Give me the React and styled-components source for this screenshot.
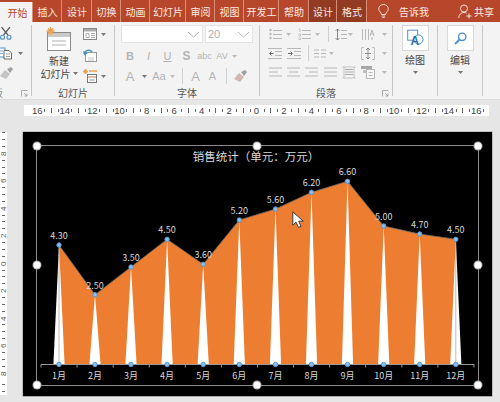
import React from "react";
import styled, { createGlobalStyle } from "styled-components";

const Global = createGlobalStyle`
  html, body { margin: 0; padding: 0; background: #e6e6e6; }
  body { font-family: "Noto Sans CJK SC", "Liberation Sans", sans-serif; }
  #root { width: 500px; height: 402px; overflow: hidden; }
`;

const Page = styled.div`
  width: 500px;
  height: 402px;
  display: flex;
  flex-direction: column;
  overflow: hidden;
  background: #e6e6e6;
`;

/* ---------- tab strip ---------- */
const TabBar = styled.div`
  height: 22px;
  flex: none;
  display: flex;
  background: #b7472a;
`;
const Tab = styled.div`
  flex: none;
  width: ${(p) => p.$w}px;
  box-sizing: border-box;
  margin-top: ${(p) => (p.$active ? 2 : 0)}px;
  height: ${(p) => (p.$active ? 20 : 22)}px;
  padding-left: ${(p) => (p.$active ? 3 : 1)}px;
  display: flex;
  align-items: center;
  justify-content: center;
  font-size: 10px;
  white-space: nowrap;
  overflow: hidden;
  color: ${(p) => (p.$active ? "#b7472a" : "#fbe9e2")};
  background: ${(p) => (p.$active ? "#f3f3f3" : p.$dark ? "#923a22" : "transparent")};
  border-right: ${(p) => (p.$plain ? "none" : "1px solid #d98d75")};
`;
const TabTail = styled.div`
  display: flex;
  align-items: center;
  color: #fbe9e2;
  font-size: 10px;
  height: 22px;
  margin-left: ${(p) => p.$ml}px;
  gap: ${(p) => p.$gap || 0}px;
`;

/* ---------- ribbon ---------- */
const Ribbon = styled.div`
  height: 78px;
  flex: none;
  box-sizing: border-box;
  display: flex;
  background: #f3f3f3;
  border-bottom: 1px solid #dcdcdc;
`;
const Group = styled.div`
  flex: none;
  width: ${(p) => p.$w}px;
  box-sizing: border-box;
  height: 71px;
  margin-top: 3px;
  border-right: 1px solid #c6c6c6;
  display: flex;
  flex-direction: column;
  padding-left: ${(p) => p.$pl || 0}px;
`;
const GroupBody = styled.div`
  flex: 1;
  min-height: 0;
  display: flex;
  flex-direction: ${(p) => (p.$row ? "row" : "column")};
  align-items: ${(p) => (p.$center ? "center" : "stretch")};
  padding-top: ${(p) => p.$pt || 0}px;
  gap: ${(p) => p.$gap || 0}px;
`;
const LabelRow = styled.div`
  height: 14px;
  margin-bottom: -4px;
  margin-left: ${(p) => -(p.$pl || 0)}px;
  display: grid;
  grid-template-columns: 1fr auto 1fr;
  align-items: center;
  font-size: 10px;
  line-height: 14px;
  color: #555;
`;
const LabelText = styled.span`
  grid-column: 2;
  white-space: nowrap;
`;
const Launcher = styled.span`
  grid-column: 3;
  justify-self: end;
  margin-right: 3px;
  display: flex;
`;
const ClippedLabel = styled.span`
  grid-column: 1;
  margin-left: -7px;
  color: #888;
`;
const Row = styled.div`
  display: flex;
  align-items: center;
  height: ${(p) => p.$h || 14}px;
  flex: none;
`;
const Slot = styled.div`
  flex: none;
  width: ${(p) => p.$w}px;
  display: flex;
  align-items: center;
  justify-content: center;
`;
const Letter = styled.span`
  font-family: "Liberation Sans", sans-serif;
  color: #b3b3b3;
  line-height: 1;
  font-size: ${(p) => p.$s || 11}px;
  font-weight: ${(p) => (p.$bold ? 700 : 400)};
  font-style: ${(p) => (p.$italic ? "italic" : "normal")};
  text-decoration: ${(p) => (p.$under ? "underline" : "none")};
  letter-spacing: ${(p) => p.$ls || 0}px;
`;
const RowDivider = styled.div`
  width: 1px;
  height: 16px;
  background: #d0d0d0;
`;
const Combo = styled.div`
  flex: none;
  box-sizing: border-box;
  width: ${(p) => p.$w}px;
  height: 18px;
  margin-right: 2px;
  background: #fff;
  border: 1px solid #e3e3e3;
  display: flex;
  align-items: center;
  justify-content: space-between;
  padding: 0 2px 0 2px;
  font-family: "Liberation Sans", sans-serif;
  font-size: 11px;
  color: #b0b0b0;
`;
const BigCol = styled.div`
  width: 48px;
  margin-left: 3px;
  flex: none;
  display: flex;
  flex-direction: column;
  align-items: center;
  color: #444;
  font-size: 10px;
  line-height: 13px;
`;
const BigText = styled.div`
  white-space: nowrap;
  display: flex;
  align-items: center;
  gap: 2px;
  margin-top: ${(p) => p.$mt || 0}px;
`;
const SmallCol = styled.div`
  flex: none;
  display: flex;
  flex-direction: column;
  gap: ${(p) => p.$gap || 7}px;
  align-items: flex-start;
`;
const IconRow = styled.div`
  display: flex;
  align-items: center;
  gap: ${(p) => p.$gap || 3}px;
  height: 14px;
`;
const SquareButton = styled.div`
  box-sizing: border-box;
  width: 27px;
  height: 26px;
  background: #fff;
  border: 1px solid #d8d8d8;
  display: flex;
  align-items: center;
  justify-content: center;
  flex: none;
`;
const ButtonText = styled.div`
  font-size: 10px;
  line-height: 12px;
  color: #444;
  margin-top: 3px;
`;

/* ---------- rulers ---------- */
const HRulerBar = styled.div`
  height: 20px;
  flex: none;
  display: flex;
  align-items: center;
  padding-left: 24px;
  background: #e6e6e6;
`;
const HRuler = styled.div`
  width: 465px;
  height: 11px;
  background: #fff;
  display: flex;
  align-items: center;
  padding-left: 8px;
  box-sizing: border-box;
  overflow: hidden;
`;
const HCell = styled.div`
  flex: none;
  width: 27.45px;
  display: flex;
  align-items: center;
`;
const HNum = styled.span`
  flex: none;
  width: 10px;
  text-align: center;
  font-family: "Liberation Sans", sans-serif;
  font-size: 9.5px;
  line-height: 11px;
  color: #444;
`;
const HTicks = styled.div`
  display: flex;
  align-items: center;
  gap: 5.85px;
  margin-left: 2px;
`;
const HTick = styled.i`
  display: block;
  width: 1px;
  height: ${(p) => (p.$long ? 5 : 3)}px;
  background: #666;
`;
const Workspace = styled.div`
  flex: 1;
  min-height: 0;
  display: flex;
  align-items: flex-start;
  padding-top: 12px;
`;
const VRuler = styled.div`
  flex: none;
  width: 7px;
  height: 263px;
  margin-right: 15.5px;
  background: #fff;
  display: flex;
  flex-direction: column;
  overflow: hidden;
`;
const VCell = styled.div`
  flex: none;
  height: ${(p) => p.$h || 27.45}px;
  display: flex;
  flex-direction: column;
  align-items: center;
  justify-content: flex-end;
`;
const VNum = styled.span`
  writing-mode: vertical-rl;
  transform: rotate(180deg);
  font-family: "Liberation Sans", sans-serif;
  font-size: 8px;
  line-height: 7px;
  height: 9px;
  text-align: center;
  color: #555;
`;
const VTicks = styled.div`
  display: flex;
  flex-direction: column;
  gap: 5.85px;
  margin-bottom: 2px;
`;
const VTick = styled.i`
  display: block;
  width: 3px;
  height: 1px;
  background: #666;
`;

/* ---------- slide ---------- */
const Slide = styled.div`
  position: relative;
  flex: none;
  width: 469px;
  height: 264px;
  box-sizing: border-box;
  background: #000;
  box-shadow: 0 0 0 0.5px #9a9a9a, 0 1px 0 #b5b5b5;
`;
const ChartSvg = styled.svg`
  display: block;
  width: 469px;
  height: 264px;
`;
const Frame = styled.div`
  position: absolute;
  left: 13px;
  top: 13px;
  width: 443px;
  height: 240.5px;
  box-sizing: border-box;
  border: 1px solid #8c8c8c;
`;
const Handle = styled.div`
  position: absolute;
  left: ${(p) => p.$x}%;
  top: ${(p) => p.$y}%;
  width: 7px;
  height: 7px;
  border-radius: 50%;
  transform: translate(-50%, -50%);
  background: #fff;
  box-shadow: 0 0 0 1px #a8a8a8;
`;
const Cursor = styled.svg`
  position: absolute;
  left: 269px;
  top: 79px;
  width: 13px;
  height: 17px;
`;

/* ---------- icons ---------- */
const G = "#b8b8b8";
const D = "#6a6a6a";
const B = "#4a8fc9";
const O = "#f0a050";

const Ico = ({ w, h, children }) => (
  <svg width={w} height={h} viewBox={`0 0 ${w} ${h}`} fill="none" style={{ display: "block", flex: "none" }}>
    {children}
  </svg>
);
const Caret = ({ c = "#777" }) => (
  <Ico w={5} h={3}>
    <path d="M0 0h5L2.5 3z" fill={c} />
  </Ico>
);
const Chevron = () => (
  <Ico w={13} h={7}>
    <path d="M1 1l5.5 5L12 1" stroke="#b4b4b4" strokeWidth="1" />
  </Ico>
);
const LauncherIcon = () => (
  <Ico w={7} h={7}>
    <path d="M.5 6.5v-6h6M3 3l3 3M6 3.5V6H3.5" stroke="#999" strokeWidth=".8" />
  </Ico>
);
const Lines = ({ x = 0, w = 10, ys = [], c = G }) => (
  <>
    {ys.map((y) => (
      <path key={y} d={`M${x} ${y}h${w}`} stroke={c} strokeWidth="1" />
    ))}
  </>
);
const ListIcon = () => (
  <Ico w={13} h={12}>
    <circle cx="1.5" cy="2" r="1.2" fill={G} />
    <circle cx="1.5" cy="6" r="1.2" fill={G} />
    <circle cx="1.5" cy="10" r="1.2" fill={G} />
    <Lines x={4} w={9} ys={[2.5, 6.5, 10.5]} />
  </Ico>
);
const NumListIcon = () => (
  <Ico w={13} h={12}>
    <path d="M1 1h1v3M.5 6h2v2h-2M.5 10h2v1.5h-2" stroke={G} strokeWidth=".8" />
    <Lines x={4} w={9} ys={[2.5, 6.5, 10.5]} />
  </Ico>
);
const SpacingIcon = () => (
  <Ico w={12} h={13}>
    <path d="M2.5 1v11M.5 3l2-2 2 2M.5 10l2 2 2-2" stroke={D} strokeWidth=".8" />
    <Lines x={6} w={6} ys={[2.5, 6.5, 10.5]} />
  </Ico>
);
const TextDirIcon = () => (
  <Ico w={14} h={13}>
    <path d="M1.5 1v11M4.5 1v11M7.5 1v11" stroke={G} strokeWidth="1" />
    <path d="M9 8l2-6 2 6M9.5 6h3M11 9v3" stroke={G} strokeWidth="1" />
  </Ico>
);
const IndentIcon = ({ flip }) => (
  <Ico w={14} h={11}>
    <path d={flip ? "M1 5.5h4M3.5 3.5l2 2-2 2" : "M5.5 5.5h-4M3.5 3.5l-2 2 2 2"} stroke={D} strokeWidth="1" />
    <Lines x={0} w={14} ys={[0.5, 10.5]} />
    <Lines x={7} w={7} ys={[3.5, 7.5]} />
  </Ico>
);
const ColsIcon = () => (
  <Ico w={12} h={9}>
    <Lines x={0} w={5} ys={[1, 4.5, 8]} />
    <Lines x={7} w={5} ys={[1, 4.5, 8]} />
  </Ico>
);
const AlignVIcon = () => (
  <Ico w={14} h={13}>
    <path d="M3 .5H.5v12H3M11 .5h2.5v12H11" stroke={G} strokeWidth=".8" />
    <path d="M7 1v11M5 3l2-2 2 2M5 10l2 2 2-2M4 6.5h6" stroke={D} strokeWidth=".7" />
  </Ico>
);
const AlignIcon = ({ kind }) => {
  const short = kind === "left" ? "M0 5h9M0 9h13" : kind === "center" ? "M2 5h9M0 9h13" : kind === "right" ? "M4 5h9M0 9h13" : "M0 5h13M0 9h13";
  return (
    <Ico w={13} h={10}>
      <path d="M0 1h13" stroke={G} />
      <path d={short} stroke={G} />
    </Ico>
  );
};
const DistIcon = () => (
  <Ico w={14} h={13}>
    <path d="M.5 1h13M.5 12h13M2 1v11M12 1v11" stroke={G} strokeWidth=".8" />
    <Lines x={3} w={8} ys={[3.5, 6, 8.5]} c="#aaa" />
  </Ico>
);
const SmartIcon = () => (
  <Ico w={14} h={14}>
    <path d="M0 1h11v3H0z" fill="#a8a8a8" />
    <path d="M2 5h4v3H2z" fill="#c0c0c0" />
    <rect x="5.5" y="4.5" width="8" height="9" stroke={G} fill="#f8f8f8" />
    <Lines x={7.5} w={4} ys={[7.5, 10.5]} />
  </Ico>
);
const Scissors = () => (
  <Ico w={12} h={13}>
    <path d="M10 0L3.5 8M1.5 0l6.5 8" stroke="#5a5a5a" strokeWidth="1.2" />
    <circle cx="2.5" cy="10.3" r="2" stroke={B} strokeWidth="1.1" />
    <circle cx="9" cy="10.3" r="2" stroke={B} strokeWidth="1.1" />
  </Ico>
);
const CopyIcon = () => (
  <Ico w={13} h={13}>
    <rect x="-3" y="1" width="8" height="9" fill="#fff" stroke={B} />
    <path d="M4 3.5h5l2.5 2.5v6H4z" fill="#fff" stroke="#666" />
    <path d="M-1 4h4M-1 6.5h4" stroke={B} strokeWidth=".8" />
    <path d="M6 7h4M6 9.5h4" stroke="#888" strokeWidth=".8" />
  </Ico>
);
const BrushIcon = ({ c = "#c4c4c4" }) => (
  <Ico w={13} h={13}>
    <path d="M7 2l4-2 2 2-3 4z" fill="#a0a0a0" />
    <path d="M5 3l5 4-4 5-6-3z" fill={c} />
  </Ico>
);
const NewSlideIcon = () => (
  <Ico w={26} h={24}>
    <rect x="1.5" y="5.5" width="23" height="18" fill="#fff" stroke="#8a8a8a" />
    <path d="M2 6h22v4H2z" fill="#c9c9c9" />
    <path d="M6 14h14M6 18h14" stroke="#b0b0b0" />
    <g stroke={O} strokeWidth="1.3">
      <path d="M4.5 0v8M.5 4h8M1.8 1.3l5.4 5.4M7.2 1.3L1.8 6.7" />
    </g>
  </Ico>
);
const LayoutIcon = () => (
  <Ico w={14} h={12}>
    <rect x=".5" y=".5" width="13" height="11" fill="#fff" stroke="#888" />
    <path d="M1 1h12v2.5H1z" fill="#aaa" />
    <path d="M3 5.5h3v4H3zM8 5.5h4M8 7.5h4M8 9.5h4" stroke="#999" strokeWidth=".8" />
  </Ico>
);
const ResetIcon = () => (
  <Ico w={14} h={13}>
    <rect x="2.5" y="3.5" width="11" height="9" fill="#fff" stroke="#999" />
    <path d="M5 9h6M5 11h6" stroke="#bbb" strokeWidth=".8" />
    <path d="M1 5c1-4 6-5 8-2" stroke={B} strokeWidth="1.5" />
    <path d="M0 2l1.5 4.5L5 4z" fill={B} />
  </Ico>
);
const SectionIcon = () => (
  <Ico w={14} h={14}>
    <g stroke={O} strokeWidth="1.1"><path d="M2.5 0v5M0 2.5h5M.8.8l3.4 3.4M4.2.8L.8 4.2" /></g>
    <path d="M6 2h8" stroke={O} strokeWidth="1.5" />
    <rect x="4.5" y="5.5" width="9" height="8" fill="#fff" stroke="#777" />
    <path d="M5 8h8" stroke="#c47b5c" />
    <path d="M6.5 11h5" stroke="#888" />
  </Ico>
);
const DrawIcon = () => (
  <Ico w={17} h={20}>
    <rect x=".7" y="2.2" width="10" height="10" stroke={B} strokeWidth="1" />
    <circle cx="11.5" cy="11.5" r="4.6" stroke={B} strokeWidth="1" fill="#fff" />
    <text x="3.5" y="17" fontFamily="Liberation Sans" fontWeight="700" fontSize="12" fill="#2b6fa8">A</text>
  </Ico>
);
const SearchIcon = () => (
  <Ico w={13} h={13}>
    <circle cx="8.2" cy="4.8" r="3.7" stroke={B} strokeWidth="1.4" />
    <path d="M5.4 7.6L1 12" stroke={B} strokeWidth="2" />
  </Ico>
);
const Bulb = () => (
  <Ico w={11} h={14}>
    <path d="M3.5 10.5C3 8 .7 7.3.7 4.8a4.8 4.3 0 0 1 9.6 0c0 2.5-2.3 3.2-2.8 5.7z" stroke="#fbe9e2" strokeWidth=".9" />
    <path d="M3.7 12h3.6M4.3 13.5h2.4" stroke="#fbe9e2" strokeWidth=".9" />
  </Ico>
);
const Person = () => (
  <Ico w={14} h={15}>
    <circle cx="6" cy="4.5" r="3.5" stroke="#fbe9e2" strokeWidth=".9" />
    <path d="M.7 14c0-3.5 2.5-5.5 5.3-5.5 1 0 2 .3 2.6.8" stroke="#fbe9e2" strokeWidth=".9" />
    <path d="M11 9.5v5M8.5 12h5" stroke="#fbe9e2" strokeWidth="1" />
  </Ico>
);

/* ---------- data ---------- */
const TABS = [
  ["开始", 33, "active"], ["插入", 29], ["设计", 30], ["切换", 29], ["动画", 29], ["幻灯片", 36],
  ["审阅", 29], ["视图", 29], ["开发工", 35], ["帮助", 30], ["设计", 28, "dark"], ["格式", 30, "dark"],
];
const NUMS = [16, 14, 12, 10, 8, 6, 4, 2, 0, 2, 4, 6, 8, 10, 12, 14, 16];
const VNUMS = [8, 6, 4, 2, 0, 2, 4, 6, 8];

const POINTS = [
  ["1月", "4.30", 58.5, 245], ["2月", "2.50", 94.5, 294.7], ["3月", "3.50", 130.5, 267],
  ["4月", "4.50", 166.6, 239.3], ["5月", "3.60", 202.7, 264.3], ["6月", "5.20", 238.8, 220],
  ["7月", "5.60", 275, 209], ["8月", "6.20", 311, 192.3], ["9月", "6.60", 347, 181.3],
  ["10月", "5.00", 383.2, 226], ["11月", "4.70", 419.2, 234], ["12月", "4.50", 455.3, 239.3],
];
const BASE = 364.5;
const areaPts =
  POINTS.map((p) => `${p[2]},${p[3]}`).join(" ") + ` ${POINTS[11][2]},${BASE} ${POINTS[0][2]},${BASE}`;
const linePts = POINTS.map((p) => `${p[2]},${p[3]}`).join(" ");
const HANDLES = [[0, 0], [50, 0], [100, 0], [0, 50], [100, 50], [0, 100], [50, 100], [100, 100]];

const Chart = () => (
  <ChartSvg viewBox="22.5 132 469 264">
    <text x="255.5" y="161" textAnchor="middle" fontFamily="Noto Sans CJK SC" fontSize="11.5" fill="#d9d9d9">
      销售统计（单元：万元）
    </text>
    <polygon points={areaPts} fill="#ed7d31" />
    {POINTS.map((p) => (
      <polygon key={p[0]} points={`${p[2]},${p[3]} ${p[2] - 5.6},${BASE} ${p[2] + 5.6},${BASE}`} fill="#fff" />
    ))}
    <path d={`M${POINTS[0][2]} ${POINTS[0][3]}V${BASE}M${POINTS[11][2]} ${POINTS[11][3]}V${BASE}`} stroke="#a8a8a8" strokeWidth=".8" />
    <polyline points={linePts} fill="none" stroke="#6b6b6b" strokeWidth=".8" />
    <path d={`M40.5 ${BASE}H473.5`} stroke="#9a9a9a" strokeWidth="1" />
    {Array.from({ length: 13 }, (_, i) => (
      <path key={i} d={`M${40.5 + i * 36.08} ${BASE}v3`} stroke="#9a9a9a" strokeWidth="1" />
    ))}
    {POINTS.map((p) => (
      <g key={p[0]}>
        <circle cx={p[2]} cy={p[3]} r="2.2" fill="#8fbfe8" stroke="#4f96d6" strokeWidth="1" />
        <circle cx={p[2]} cy={BASE} r="2.2" fill="#8fbfe8" stroke="#4f96d6" strokeWidth="1" />
        <text x={p[2]} y={p[3] - 6} textAnchor="middle" fontFamily="Noto Sans CJK SC" fontSize="9" fill="#d9d9d9">
          {p[1]}
        </text>
        <text x={p[2]} y="379" textAnchor="middle" fontFamily="Noto Sans CJK SC" fontSize="9" fill="#d9d9d9">
          {p[0]}
        </text>
      </g>
    ))}
  </ChartSvg>
);

export default function App() {
  return (
    <Page>
      <Global />
      <TabBar>
        {TABS.map(([t, w, k], i) => (
          <Tab key={i} $w={w} $active={k === "active"} $dark={k === "dark"}>{t}</Tab>
        ))}
        <TabTail $ml={11}><Bulb /></TabTail>
        <TabTail $ml={10}>告诉我</TabTail>
        <TabTail $ml={29} $gap={2}><Person />共享</TabTail>
      </TabBar>

      <Ribbon>
        <Group $w={32}>
          <GroupBody $pt={1} $gap={6}>
            <Row $h={14}><Scissors /></Row>
            <Row $h={14}><CopyIcon /><Slot $w={14}><Caret /></Slot></Row>
            <Row $h={14}><BrushIcon /></Row>
          </GroupBody>
          <LabelRow>
            <ClippedLabel>板</ClippedLabel>
            <Launcher><LauncherIcon /></Launcher>
          </LabelRow>
        </Group>

        <Group $w={83}>
          <GroupBody $row $pt={2}>
            <BigCol>
              <NewSlideIcon />
              <BigText $mt={3}>新建</BigText>
              <BigText>幻灯片 <Caret /></BigText>
            </BigCol>
            <SmallCol $gap={7}>
              <IconRow $gap={4}><LayoutIcon /><Caret /></IconRow>
              <IconRow $gap={4}><ResetIcon /></IconRow>
              <IconRow $gap={4}><SectionIcon /><Caret /></IconRow>
            </SmallCol>
          </GroupBody>
          <LabelRow><LabelText>幻灯片</LabelText></LabelRow>
        </Group>

        <Group $w={145} $pl={6}>
          <GroupBody $gap={6}>
            <Row $h={18}>
              <Combo $w={82}><span /><Chevron /></Combo>
              <Combo $w={48}>20<Chevron /></Combo>
            </Row>
            <Row $h={14}>
              <Slot $w={18}><Letter $bold $s={11}>B</Letter></Slot>
              <Slot $w={19}><Letter $italic $s={11}>I</Letter></Slot>
              <Slot $w={19}><Letter $under $s={11}>U</Letter></Slot>
              <Slot $w={19}><Letter $bold $s={12}>S</Letter></Slot>
              <Slot $w={17}><Letter $s={9}>abc</Letter></Slot>
              <Slot $w={18}><Letter $s={9}>AV</Letter></Slot>
              <Slot $w={6}><Caret c="#bbb" /></Slot>
            </Row>
            <Row $h={14}>
              <Slot $w={18}><Letter $s={13}>A</Letter></Slot>
              <Slot $w={10}><Caret /></Slot>
              <Slot $w={20}><Letter $s={11}>Aa</Letter></Slot>
              <Slot $w={7}><Caret c="#bbb" /></Slot>
              <Slot $w={12}><RowDivider /></Slot>
              <Slot $w={15}><Letter $s={13}>A</Letter></Slot>
              <Slot $w={19}><Letter $s={11}>A</Letter></Slot>
              <Slot $w={8}><RowDivider /></Slot>
              <Slot $w={20}><BrushIcon c="#d0b8b0" /></Slot>
            </Row>
          </GroupBody>
          <LabelRow $pl={6}><LabelText>字体</LabelText></LabelRow>
        </Group>

        <Group $w={133} $pl={6}>
          <GroupBody $pt={2} $gap={5}>
            <Row>
              <Slot $w={18}><ListIcon /></Slot>
              <Slot $w={8}><Caret c="#bbb" /></Slot>
              <Slot $w={3} />
              <Slot $w={18}><NumListIcon /></Slot>
              <Slot $w={8}><Caret c="#bbb" /></Slot>
              <Slot $w={14}><RowDivider /></Slot>
              <Slot $w={12}><SpacingIcon /></Slot>
              <Slot $w={7}><Caret c="#bbb" /></Slot>
              <Slot $w={4} />
              <Slot $w={20}><TextDirIcon /></Slot>
              <Slot $w={3} />
              <Slot $w={7}><Caret c="#bbb" /></Slot>
            </Row>
            <Row>
              <Slot $w={18}><IndentIcon /></Slot>
              <Slot $w={19}><IndentIcon flip /></Slot>
              <Slot $w={10}><RowDivider /></Slot>
              <Slot $w={14}><ColsIcon /></Slot>
              <Slot $w={8}><Caret c="#bbb" /></Slot>
              <Slot $w={23} />
              <Slot $w={20}><AlignVIcon /></Slot>
              <Slot $w={3} />
              <Slot $w={7}><Caret c="#bbb" /></Slot>
            </Row>
            <Row>
              <Slot $w={18}><AlignIcon kind="left" /></Slot>
              <Slot $w={18}><AlignIcon kind="center" /></Slot>
              <Slot $w={19}><AlignIcon kind="right" /></Slot>
              <Slot $w={19}><AlignIcon kind="justify" /></Slot>
              <Slot $w={18}><DistIcon /></Slot>
              <Slot $w={20}><SmartIcon /></Slot>
              <Slot $w={3} />
              <Slot $w={7}><Caret c="#bbb" /></Slot>
            </Row>
          </GroupBody>
          <LabelRow $pl={6}>
            <LabelText>段落</LabelText>
            <Launcher><LauncherIcon /></Launcher>
          </LabelRow>
        </Group>

        <Group $w={45}>
          <GroupBody $center>
            <SquareButton><DrawIcon /></SquareButton>
            <ButtonText>绘图</ButtonText>
            <BigText $mt={5}><Caret /></BigText>
          </GroupBody>
        </Group>
        <Group $w={45}>
          <GroupBody $center>
            <SquareButton><SearchIcon /></SquareButton>
            <ButtonText>编辑</ButtonText>
            <BigText $mt={5}><Caret /></BigText>
          </GroupBody>
        </Group>
      </Ribbon>

      <HRulerBar>
        <HRuler>
          {NUMS.map((n, i) => (
            <HCell key={i}>
              <HNum>{n}</HNum>
              <HTicks>
                <HTick /><HTick $long /><HTick />
              </HTicks>
            </HCell>
          ))}
        </HRuler>
      </HRulerBar>

      <Workspace>
        <VRuler>
          {VNUMS.map((n, i) => (
            <VCell key={i} $h={i === 0 ? 26 : undefined}>
              <VTicks><VTick /><VTick /><VTick /></VTicks>
              <VNum>{n}</VNum>
            </VCell>
          ))}
          <VCell $h={16}>
            <VTicks><VTick /><VTick /></VTicks>
          </VCell>
        </VRuler>
        <Slide>
          <Chart />
          <Frame>
            {HANDLES.map(([x, y]) => (
              <Handle key={`${x}-${y}`} $x={x} $y={y} />
            ))}
          </Frame>
          <Cursor viewBox="0 0 13 17">
            <path d="M.8.8v13.4l3.3-3 2.3 5.2 2.6-1.1-2.3-5.1h4.6z" fill="#fff" stroke="#3a3a3a" strokeWidth="1" />
          </Cursor>
        </Slide>
      </Workspace>
    </Page>
  );
}
